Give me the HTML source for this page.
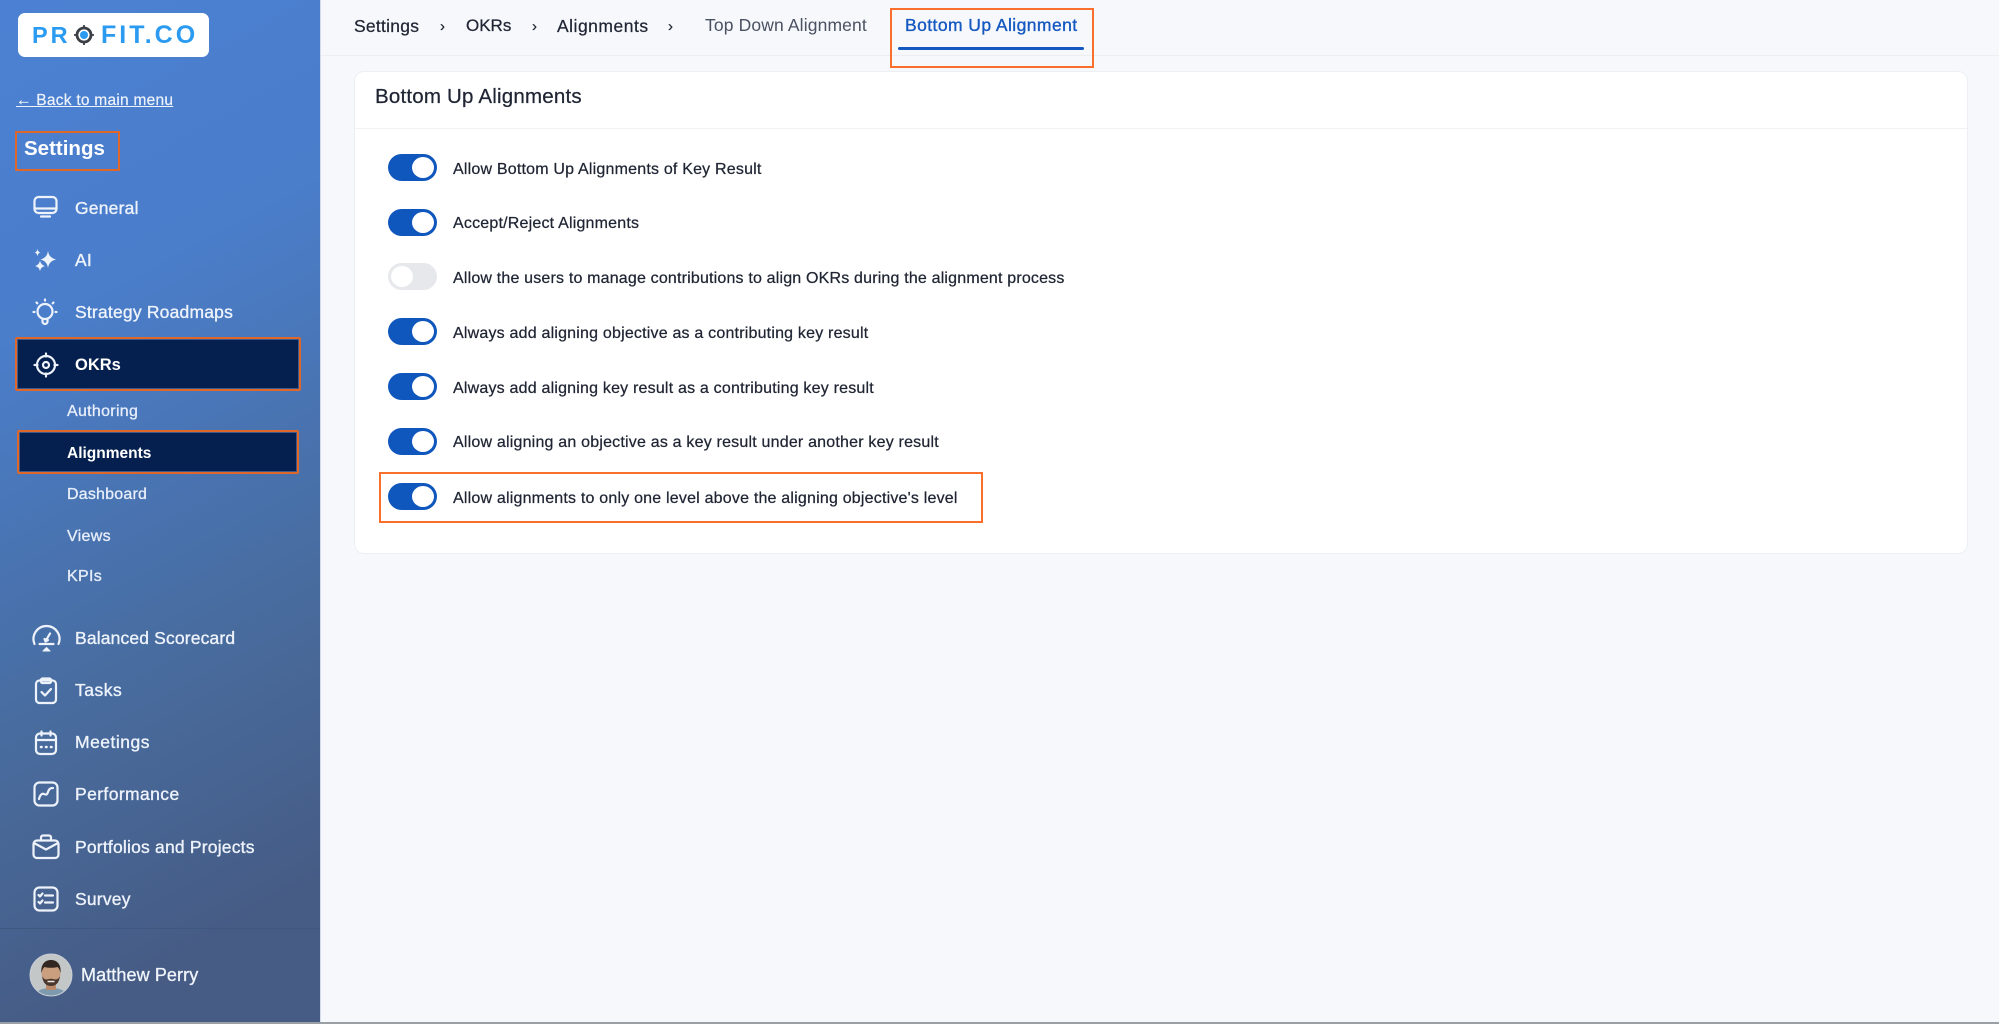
<!DOCTYPE html>
<html><head><meta charset="utf-8"><title>Bottom Up Alignment</title>
<style>
*{box-sizing:border-box}
html{background:#f6f8fc}
html,body{margin:0;padding:0;width:1999px;height:1024px;overflow:hidden;font-family:"Liberation Sans",sans-serif}
body{background:#f6f8fc;position:relative;filter:blur(.3px)}
#side{position:absolute;left:0;top:0;width:320px;height:1022px;background:linear-gradient(152deg,#4c80d2 0%,#4a7ecb 28%,#486c9f 62%,#465c85 88%,#465c85 100%)}
.t{position:absolute;white-space:nowrap;line-height:24px;height:24px}
.m{color:#eef3fb;font-size:17.5px;left:75px;letter-spacing:.2px;-webkit-text-stroke:.35px #eef3fb}
.s{color:#e8eefa;font-size:16px;left:67px;letter-spacing:.3px;-webkit-text-stroke:.3px #e8eefa}
.b{position:absolute;border:2px solid #e0672a}
svg{position:absolute;overflow:visible}
.i{fill:none;stroke:#eef3fb;stroke-width:2.2;stroke-linecap:round;stroke-linejoin:round}
.tg{position:absolute;left:388px;width:49px;height:27px;border-radius:14px;background:#0f57bd}
.tg:after{content:"";position:absolute;right:3px;top:3px;width:22px;height:21px;border-radius:50%;background:#fff}
.off{background:#e6e8ec}
.off:after{right:auto;left:3px}
.l{color:#1f2533;font-size:16px;left:453px;letter-spacing:.2px;-webkit-text-stroke:.25px #1f2533}
.c{color:#1f2533;font-size:17.5px;letter-spacing:.1px;-webkit-text-stroke:.25px #1f2533}
.o{position:absolute;border:2px solid #fb6f2c}
</style></head><body>
<div id="side"></div>

<div style="position:absolute;left:18px;top:13px;width:191px;height:44px;background:#fff;border-radius:7px"></div>
<div class="t" style="left:32px;top:23px;color:#2a9bf0;font-size:23.5px;font-weight:700;letter-spacing:3px">PR</div>
<svg style="left:74px;top:25px" width="20" height="20" viewBox="0 0 20 20"><circle cx="10" cy="10" r="7" fill="none" stroke="#3b3f46" stroke-width="2.8"/><circle cx="10" cy="10" r="4" fill="#2a9bf0"/><path d="M10 0v2.500M10 17.500V20M0 10h2.500M17.500 10H20" stroke="#3b3f46" stroke-width="1.800"/></svg>
<div class="t" style="left:101px;top:23px;color:#2a9bf0;font-size:25px;font-weight:700;letter-spacing:3px">FIT.CO</div>

<a class="t" style="left:16px;top:89px;color:#eef3fb;font-size:15.5px;letter-spacing:.25px;text-decoration:underline;-webkit-text-stroke:.2px #eef3fb">← Back to main menu</a>
<div class="b" style="left:15px;top:131px;width:105px;height:40px"></div>
<div class="t" style="left:24px;top:137px;color:#fff;font-size:20.5px;font-weight:700">Settings</div>

<svg class="i" style="left:33px;top:195px" width="26" height="26" viewBox="0 0 26 26"><rect x="1.500" y="2" width="22" height="16" rx="4"/><path d="M1.500 13.500H23.500M8 21.500h9"/></svg>
<div class="t m" style="top:196px">General</div>
<svg style="left:34px;top:249px" width="22" height="22" viewBox="0 0 22 22" fill="#eef3fb"><path d="M14 2 Q15 9 22 10.500 Q15 12 14 19 Q13 12 6.500 10.500 Q13 9 14 2Z"/><path d="M6 11.500 Q6.800 16 11 17 Q6.800 18 6 22 Q5.200 18 1 17 Q5.200 16 6 11.500Z"/><path d="M3.500 0 Q4 3 6.500 3.500 Q4 4 3.500 7 Q3 4 .5 3.500 Q3 3 3.500 0Z"/></svg>
<div class="t m" style="top:248px">AI</div>
<svg class="i" style="left:31px;top:298px" width="28" height="28" viewBox="0 0 28 28"><circle cx="14" cy="13.500" r="7.500"/><path d="M11.500 21v2.500a2.500 2.500 0 0 0 5 0V21M14 1.500v1M5.500 4.500l.8.8M22.500 4.500l-.8.8M2.500 14h1M24.500 14h1"/></svg>
<div class="t m" style="top:300px">Strategy Roadmaps</div>

<div class="b" style="left:15px;top:337px;width:286px;height:54px;background:#05204e;box-shadow:inset 0 0 0 1px #3d5a8a;border-radius:2px"></div>
<svg class="i" style="left:33px;top:352px" width="26" height="26" viewBox="0 0 26 26"><circle cx="13" cy="13" r="9"/><circle cx="13" cy="13" r="3"/><path d="M13 1.500v3M13 21.500v3M1.500 13h3M21.500 13h3"/></svg>
<div class="t m" style="top:353px;font-weight:700;color:#fff;-webkit-text-stroke:0;font-size:16.500px;letter-spacing:0">OKRs</div>

<div class="t s" style="top:400px">Authoring</div>
<div class="b" style="left:17px;top:430px;width:282px;height:44px;background:#05204e;box-shadow:inset 0 0 0 1px #3d5a8a;border-radius:2px"></div>
<div class="t s" style="top:442px;color:#fff;font-weight:700;-webkit-text-stroke:0;letter-spacing:0;font-size:15.500px">Alignments</div>
<div class="t s" style="top:483px;letter-spacing:.2px">Dashboard</div>
<div class="t s" style="top:525px">Views</div>
<div class="t s" style="top:565px">KPIs</div>

<svg class="i" style="left:32px;top:624px" width="28" height="30" viewBox="0 0 28 30"><path d="M2.500 20A13 13 0 1 1 26.500 20"/><path d="M7.500 20H21.500M14.500 15.500l3.500-6"/><path d="M12.500 15l3.500 1-2.500 1.500z" fill="#eef3fb"/><path d="M11 27 14.500 23.500 18 27z" fill="#eef3fb" stroke-width="1"/></svg>
<div class="t m" style="top:626px;letter-spacing:.15px">Balanced Scorecard</div>
<svg class="i" style="left:34px;top:677px" width="24" height="28" viewBox="0 0 24 28"><rect x="2" y="3.500" width="20" height="22.500" rx="3.500"/><rect x="7" y="1.500" width="10" height="4.500" rx="1.500"/><path d="M7.500 15l3.500 3.500 6-6.500"/></svg>
<div class="t m" style="top:678px;letter-spacing:.5px">Tasks</div>
<svg class="i" style="left:34px;top:730px" width="24" height="26" viewBox="0 0 24 26"><rect x="2" y="3.500" width="20" height="20.500" rx="4"/><path d="M2 10h20M7.500 1.500v4M16.500 1.500v4"/><path d="M7 17h.5M12 17h.5M17 17h.5" stroke-width="2.600"/></svg>
<div class="t m" style="top:730px;letter-spacing:.5px">Meetings</div>
<svg class="i" style="left:33px;top:781px" width="26" height="26" viewBox="0 0 26 26"><rect x="1.500" y="1.500" width="23" height="23" rx="5"/><path d="M6 18c1-4 3-6 5-5 2 1 3 1 4-2s2-4 5-4"/></svg>
<div class="t m" style="top:782px;letter-spacing:.4px">Performance</div>
<svg class="i" style="left:32px;top:834px" width="28" height="26" viewBox="0 0 28 26"><rect x="1.500" y="6.500" width="25" height="17.500" rx="3.500"/><path d="M9 6V3.500a2 2 0 0 1 2-2h6a2 2 0 0 1 2 2V6M2 9 14 15.500 26 9"/></svg>
<div class="t m" style="top:835px">Portfolios and Projects</div>
<svg class="i" style="left:33px;top:886px" width="26" height="26" viewBox="0 0 26 26"><rect x="1.500" y="1.500" width="23" height="23" rx="5"/><path d="M12 9.500H20M12 16.500H20M5.500 9l1.500 1.500 2.500-3M5.500 16l1.500 1.500 2.500-3"/></svg>
<div class="t m" style="top:887px">Survey</div>

<div style="position:absolute;left:0;top:928px;width:320px;height:1px;background:#3f587f"></div>
<svg style="left:29px;top:953px" width="44" height="44" viewBox="0 0 44 44"><defs><clipPath id="av"><circle cx="22" cy="22" r="21"/></clipPath></defs><g clip-path="url(#av)"><rect width="44" height="44" fill="#c3c7c8"/><path d="M6 44c1-7 8-9 16-9s15 2 16 9z" fill="#7d9aae"/><rect x="17" y="27" width="10" height="10" fill="#b98a6c"/><ellipse cx="22" cy="20" rx="9.500" ry="12" fill="#c99f80"/><path d="M12.500 20c-1-8 3-13 9.500-13s10.500 5 9.500 13c-.8-3-1.500-5-3-6-4 1-9 1-13 0-1.500 1-2.200 3-3 6z" fill="#332721"/><path d="M13 23c1 7 4 10 9 10s8-3 9-10c-1 2-2.500 3.500-4.500 3.500-3-1-6-1-9 0-2 0-3.500-1.500-4.500-3.500z" fill="#4a382e"/><path d="M18.500 28.500h7" stroke="#efe6de" stroke-width="1.500"/></g><circle cx="22" cy="22" r="21" fill="none" stroke="#c9ced6" stroke-width="1"/></svg>
<div class="t" style="left:81px;top:963px;color:#f1f5fb;font-size:18px;letter-spacing:.1px;-webkit-text-stroke:.3px #f1f5fb">Matthew Perry</div>

<div style="position:absolute;left:320px;top:0;width:1px;height:1022px;background:#d5dceb"></div>
<div style="position:absolute;left:321px;top:55px;width:1678px;height:1px;background:#eceef3"></div>
<div class="t c" style="left:354px;top:14px;letter-spacing:.25px">Settings</div>
<div class="t c" style="left:440px;top:15px;font-size:15px">›</div>
<div class="t c" style="left:466px;top:14px;letter-spacing:0;font-size:17px">OKRs</div>
<div class="t c" style="left:532px;top:15px;font-size:15px">›</div>
<div class="t c" style="left:557px;top:14px;font-size:17.5px;letter-spacing:.5px">Alignments</div>
<div class="t c" style="left:668px;top:15px;font-size:15px">›</div>
<div class="t" style="left:705px;top:13px;color:#4a5160;font-size:17.5px;letter-spacing:.13px">Top Down Alignment</div>
<div class="t" style="left:905px;top:13px;color:#1558c0;font-size:17.5px;letter-spacing:.43px;-webkit-text-stroke:.35px #1558c0">Bottom Up Alignment</div>
<div style="position:absolute;left:898px;top:47px;width:186px;height:3px;background:#1558c0;border-radius:2px"></div>
<div class="o" style="left:890px;top:8px;width:204px;height:60px"></div>

<div style="position:absolute;left:354px;top:71px;width:1614px;height:483px;background:#fff;border:1px solid #eceff4;border-radius:10px"></div>
<div style="position:absolute;left:355px;top:128px;width:1612px;height:1px;background:#f0f2f6"></div>
<div class="t" style="left:375px;top:85px;color:#1f2533;font-size:20.5px;letter-spacing:.2px;-webkit-text-stroke:.25px #1f2533">Bottom Up Alignments</div>

<div class="tg" style="top:154px"></div><div class="t l" style="top:158px">Allow Bottom Up Alignments of Key Result</div>
<div class="tg" style="top:209px"></div><div class="t l" style="top:212px">Accept/Reject Alignments</div>
<div class="tg off" style="top:263px"></div><div class="t l" style="top:267px;letter-spacing:.18px">Allow the users to manage contributions to align OKRs during the alignment process</div>
<div class="tg" style="top:318px"></div><div class="t l" style="top:322px">Always add aligning objective as a contributing key result</div>
<div class="tg" style="top:373px"></div><div class="t l" style="top:377px">Always add aligning key result as a contributing key result</div>
<div class="tg" style="top:428px"></div><div class="t l" style="top:431px">Allow aligning an objective as a key result under another key result</div>
<div class="tg" style="top:483px"></div><div class="t l" style="top:487px">Allow alignments to only one level above the aligning objective's level</div>
<div class="o" style="left:379px;top:472px;width:604px;height:51px"></div>

<div style="position:absolute;left:0;top:1022px;width:1999px;height:2px;background:#9a9ea5"></div>
</body></html>
